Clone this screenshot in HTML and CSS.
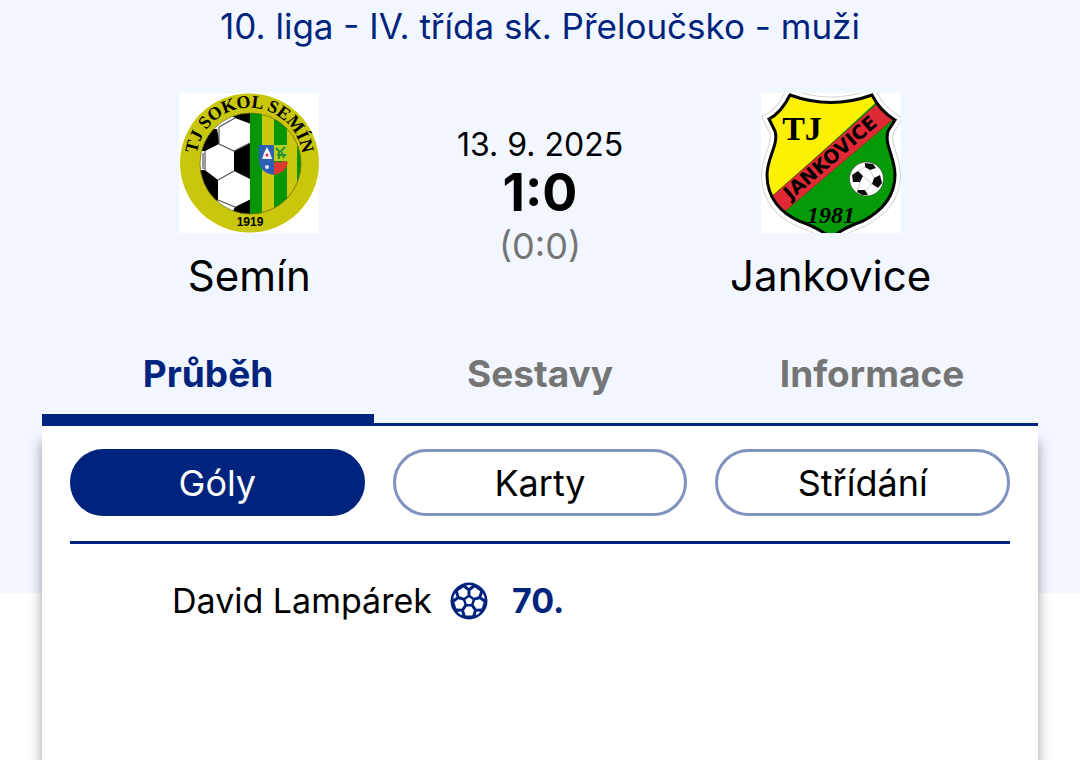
FILE: index.html
```html
<!DOCTYPE html>
<html lang="cs">
<head>
    <meta charset="UTF-8">
    <meta name="viewport" content="width=device-width, initial-scale=1.0">
    <title>Semín - Jankovice</title>
    <link rel="stylesheet" href="styles.css">
</head>
<body>
    <div class="page">
        <h1 class="league">10. liga - IV. třída sk. Přeloučsko - muži</h1>

        <div class="match">
            <div class="team">
                <svg class="logo" viewBox="0 0 140 140" aria-hidden="true">
                    <defs>
                        <clipPath id="inner"><circle cx="71.5" cy="70.5" r="50.5"/></clipPath>
                        <path id="arc" d="M18 75 A53 53 0 1 1 123 75"/>
                    </defs>
                    <rect width="140" height="140" fill="#fff"/>
                    <circle cx="70.5" cy="70" r="69.5" fill="#c9c70c"/>
                    <g clip-path="url(#inner)">
                        <rect x="20" y="20" width="52" height="102" fill="#fff"/>
                        <!-- mic -->
                        <path d="M54 20H72V31L56 25L52 22Z" fill="#000"/>
                        <path d="M20 58V36H38L40 47V51L26 58Z" fill="#000"/>
                        <path d="M55 58L71 50V86L55 78Z" fill="#000"/>
                        <path d="M20 77H26L39 87V107L33 109L20 100Z" fill="#000"/>
                        <path d="M56 114L72 106V122H52Z" fill="#000"/>
                        <path d="M40 34L56 25M40 34V51M40 51L55 58L71 50M26 58V78M24 60V76M39 87L55 78M39 107L56 114M33 109L39 107" fill="none" stroke="#555" stroke-width="1.2"/>
                        <!-- pruhy -->
                        <rect x="71" y="20" width="12" height="102" fill="#059605"/>
                        <rect x="83" y="20" width="12" height="102" fill="#cbc90d"/>
                        <rect x="95" y="20" width="13" height="102" fill="#059605"/>
                        <rect x="108" y="20" width="10" height="102" fill="#cbc90d"/>
                        <rect x="118" y="20" width="6" height="102" fill="#059605"/>
                    </g>
                    <circle cx="71.5" cy="70.5" r="50.5" fill="none" stroke="#6f7012" stroke-width="0.8"/>
                    <!-- obecni znak -->
                    <path d="M80 52H95V82Q80 80 80 66Z" fill="#2c5fb4"/>
                    <path d="M95 52H109V68H95Z" fill="#b5cf19"/>
                    <path d="M95 70L98 68L101 70L104 68L109 69Q107 80 95 82Z" fill="#e03a30"/>
                    <path d="M88 54L91 60L93 66H83L85 60Z" fill="#f3eef2"/>
                    <circle cx="88" cy="62" r="1.5" fill="#d43a3a"/>
                    <circle cx="88" cy="74" r="2" fill="#dce9fa"/>
                    <path d="M97 55L100 58V66M106 54L102 58L105 65M98 62H107" fill="none" stroke="#29943a" stroke-width="2"/>
                    <text class="logo-ring"><textPath href="#arc" startOffset="50%">TJ SOKOL SEMÍN</textPath></text>
                    <text class="logo-year" x="71" y="133">1919</text>
                </svg>
                <div class="team-name">Semín</div>
            </div>

            <div class="result">
                <div class="date">13. 9. 2025</div>
                <div class="score">1:0</div>
                <div class="half">(0:0)</div>
            </div>

            <div class="team">
                <svg class="logo" viewBox="0 0 140 140" aria-hidden="true">
                    <defs>
                        <path id="shield" d="M29 2Q70 17 111 2Q119 18 134 27L127 38C123 52 134 64 134 82C134 105 119 119 102 128Q82 135 70 145Q58 135 38 128C20 120 6 105 6 82C6 64 18 52 14 38L8 26Q20 20 29 2Z"/>
                        <clipPath id="shieldClip"><use href="#shield"/></clipPath>
                        <path id="diag" d="M15 120L132 19"/>
                    </defs>
                    <rect width="140" height="140" fill="#fff"/>
                    <use href="#shield" fill="none" stroke="#d5d5d5" stroke-width="12"/>
                    <use href="#shield" fill="none" stroke="#fff" stroke-width="10"/>
                    <use href="#shield" fill="#049a08"/>
                    <g clip-path="url(#shieldClip)">
                        <path d="M0 0H125L0 115Z" fill="#fdf103"/>
                        <path d="M0 113L127 1L148 13L14 127Z" fill="#df2935" stroke="#4c5a10" stroke-width="1"/>
                    </g>
                    <use href="#shield" fill="none" stroke="#050505" stroke-width="3"/>
                    <text class="logo-tj" x="41" y="47">TJ</text>
                    <text class="logo-diag"><textPath href="#diag" startOffset="50%">JANKOVICE</textPath></text>
                    <text class="logo-founded" x="70" y="130">1981</text>
                    <circle cx="105.5" cy="86" r="17" fill="#fff" stroke="#333" stroke-width="0.6"/>
                    <path d="M91 82L97 78L102 83L99 89L92 89ZM104 70L112 71L115 75L109 77L104 74ZM113 85L119 82L121 90L117 95L111 91ZM97 97L104 97L107 102L101 102L96 99Z" fill="#0a0a0a"/>
                    <path d="M97 78L104 74M109 77L113 85M102 83L111 91M99 89L97 97M104 98L111 91" fill="none" stroke="#bbb" stroke-width="0.8"/>
                </svg>
                <div class="team-name">Jankovice</div>
            </div>
        </div>

        <div class="tabs">
            <button class="tab active">Průběh</button>
            <button class="tab">Sestavy</button>
            <button class="tab">Informace</button>
        </div>
    </div>

    <div class="panel">
        <div class="filters">
            <button class="filter active">Góly</button>
            <button class="filter">Karty</button>
            <button class="filter">Střídání</button>
        </div>
        <div class="event">
            <span class="player">David Lampárek</span>
            <svg class="ball" viewBox="0 0 38 38" aria-hidden="true">
                <defs>
                    <g id="cell">
                        <path d="M16.8 24.5H21.2L24 28.5L22.3 33.4H15.7L14 28.5Z"/>
                        <path d="M16 34.5L19 32L22 34.5Q19 35.5 16 34.5Z" transform="rotate(36 19 19)"/>
                    </g>
                </defs>
                <circle cx="19" cy="19" r="18.5" fill="#00247d"/>
                <g fill="#fff">
                    <path d="M19 15.2L22.6 17.8L21.2 22H16.8L15.4 17.8Z"/>
                    <use href="#cell"/>
                    <use href="#cell" transform="rotate(72 19 19)"/>
                    <use href="#cell" transform="rotate(144 19 19)"/>
                    <use href="#cell" transform="rotate(216 19 19)"/>
                    <use href="#cell" transform="rotate(288 19 19)"/>
                </g>
            </svg>
            <span class="minute">70.</span>
        </div>
    </div>
</body>
</html>
```
FILE: styles.css
```css
*{
    box-sizing: border-box;
}
body{
    margin: 0;
    min-height: 100vh;
    display: flex;
    flex-direction: column;
    font-family: Inter, "Liberation Sans", sans-serif;
    color: #000;
    /* modry pruh za hlavickou zapasu */
    background: linear-gradient(#f2f7ff, #f2f7ff) no-repeat 0 0 / 100% 593px #fff;
}
button{
    margin: 0;
    padding: 0;
    font-family: inherit;
    cursor: pointer;
}
.page{
    padding: 0 42px;
}
.league{
    margin: 0;
    font-size: 35px;
    font-weight: 400;
    line-height: 52px;
    text-align: center;
    color: #00247d;
}
.match{
    display: grid;
    grid-template-columns: 1fr 1fr 1fr;
    padding: 41px 62px 0;
    text-align: center;
}
.logo{
    display: block;
    width: 140px;
    height: 140px;
    margin: 0 auto 18px;
}
.team-name{
    font-size: 42px;
    line-height: 50px;
}
.result{
    padding-top: 32px;
}
.date{
    font-size: 32px;
    line-height: 40px;
}
.score{
    font-size: 52px;
    font-weight: 700;
    line-height: 56px;
}
.half{
    font-size: 36px;
    line-height: 50px;
    color: #757575;
}

/* texty v logach */
.logo-ring{
    font: bold 18px "Liberation Serif", serif;
    text-anchor: middle;
}
.logo-year{
    font: bold 12px "Liberation Sans", sans-serif;
    text-anchor: middle;
}
.logo-tj{
    font: bold 34px "Liberation Serif", serif;
    text-anchor: middle;
}
.logo-diag{
    font: bold 19px "DejaVu Sans", sans-serif;
    text-anchor: middle;
}
.logo-founded{
    font: italic bold 24px "Liberation Serif", serif;
    text-anchor: middle;
}

.tabs{
    display: flex;
    margin-top: 33px;
    border-bottom: 3px solid #00247d;
}
.tab{
    flex: 1;
    border: 0;
    border-bottom: 9px solid transparent;
    background: none;
    font-size: 37px;
    font-weight: 700;
    line-height: 80px;
    color: #757575;
}
.tab.active{
    color: #00247d;
    border-bottom-color: #00247d;
}

.panel{
    flex: 1;
    margin: 0 42px;
    padding: 23px 28px;
    background: #fff;
    box-shadow: 0 16px 12px rgba(0, 0, 0, 0.4);
}
.filters{
    display: grid;
    grid-template-columns: 1fr 1fr 1fr;
    gap: 28px;
    padding-bottom: 25px;
    border-bottom: 3px solid #00247d;
}
.filter{
    height: 67px;
    border: 3px solid #8093bf;
    border-radius: 34px;
    background: #fff;
    font-size: 36px;
    font-weight: 400;
    color: #000;
}
.filter.active{
    border-color: #00247d;
    background: #00247d;
    color: #fff;
}
.event{
    display: flex;
    align-items: center;
    padding: 32px 102px 0;
    font-size: 34px;
    line-height: 50px;
}
.ball{
    width: 38px;
    height: 38px;
    margin: 0 24px 0 18px;
}
.minute{
    font-weight: 700;
    color: #00247d;
}
```
